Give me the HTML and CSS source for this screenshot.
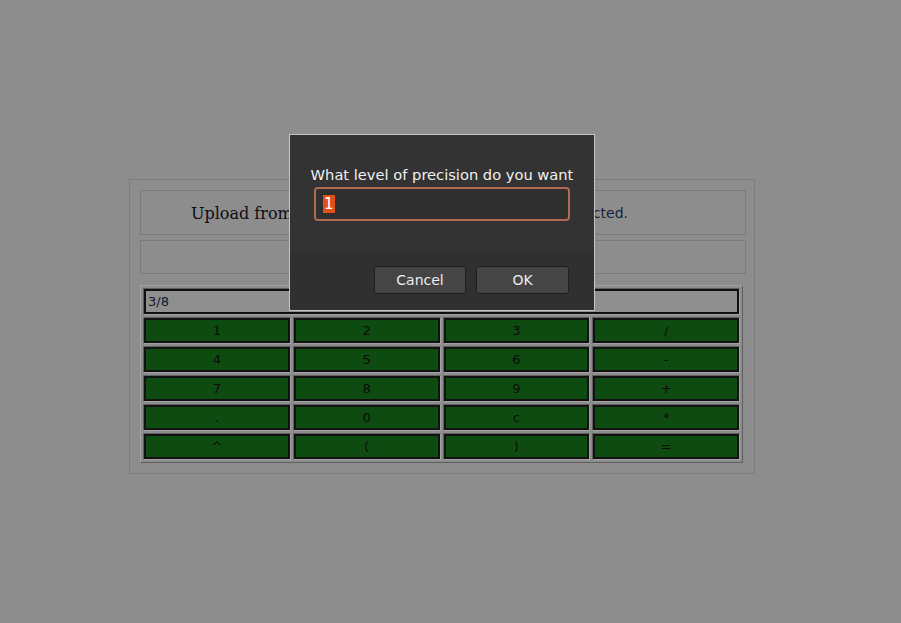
FILE: index.html
```html
<!DOCTYPE html>
<html>
<head>
<meta charset="utf-8">
<link rel="stylesheet" href="styles.css">
</head>
<body>
<div class="panel">
  <div class="upload-box">
    <span class="upload-label">Upload from file:</span>
    <span class="file-pick"><span class="fake-btn">Browse…</span><span class="file-status">No file selected.</span></span>
  </div>
  <div class="empty-box"></div>
  <table class="calc">
    <tr><td colspan="4"><div class="display">3/8</div></td></tr>
    <tr><td><div class="key">1</div></td><td><div class="key">2</div></td><td><div class="key">3</div></td><td><div class="key">/</div></td></tr>
    <tr><td><div class="key">4</div></td><td><div class="key">5</div></td><td><div class="key">6</div></td><td><div class="key">-</div></td></tr>
    <tr><td><div class="key">7</div></td><td><div class="key">8</div></td><td><div class="key">9</div></td><td><div class="key">+</div></td></tr>
    <tr><td><div class="key">.</div></td><td><div class="key">0</div></td><td><div class="key">c</div></td><td><div class="key">*</div></td></tr>
    <tr><td><div class="key">^</div></td><td><div class="key">(</div></td><td><div class="key">)</div></td><td><div class="key">=</div></td></tr>
  </table>
</div>

<div class="dialog">
  <div class="dialog-top">
    <div class="dialog-msg">What level of precision do you want</div>
    <div class="dialog-input"><span class="sel">1</span></div>
  </div>
  <div class="dialog-bottom">
    <div class="dlg-btn cancel">Cancel</div>
    <div class="dlg-btn ok">OK</div>
  </div>
</div>
</body>
</html>
```

FILE: styles.css
```css
html, body {
  margin: 0;
  padding: 0;
  background: #8d8d8d;
  width: 901px;
  height: 623px;
  overflow: hidden;
}
body {
  padding-top: 179px;
  box-sizing: border-box;
  font-family: "DejaVu Sans", sans-serif;
}
.panel {
  margin-left: 129px;
  width: 606px;
  padding: 10px 8px 10px 10px;
  border: 1px solid #7c7c7c;
}
.upload-box {
  height: 43px;
  border: 1px solid #7b7b7b;
  display: flex;
  align-items: center;
  justify-content: space-between;
  padding: 0 117px 0 50px;
}
.upload-label {
  font-family: "DejaVu Serif", serif;
  font-size: 16px;
  color: #0c0c12;
  padding-top: 2px;
}
.file-pick {
  display: flex;
  align-items: center;
  gap: 6px;
  font-size: 14px;
  color: #16233a;
}
.fake-btn {
  border: 1px solid #666;
  padding: 2px 6px;
}
.empty-box {
  margin-top: 5px;
  height: 32px;
  border: 1px solid #7b7b7b;
}
.calc {
  margin-top: 11px;
  width: 603px;
  table-layout: fixed;
  border-collapse: separate;
  border-spacing: 2px;
  border: 1px solid;
  border-color: #a2a2a2 #5f5f5f #5f5f5f #a2a2a2;
}
.calc td {
  padding: 0;
  border: 1px solid;
  border-color: #5f5f5f #a2a2a2 #a2a2a2 #5f5f5f;
}
.display {
  height: 21px;
  border: 2px solid #0f0f0f;
  background: #8f8f8f;
  font-size: 13px;
  line-height: 21px;
  padding-left: 2px;
  color: #10182a;
}
.key {
  height: 21px;
  border: 2px solid #121212;
  background: #0d4b10;
  text-align: center;
  font-size: 13px;
  line-height: 21px;
  color: #0b0b0b;
}

.dialog {
  position: absolute;
  left: 289px;
  top: 134px;
  width: 304px;
  height: 175px;
  border: 1px solid #c4c4c4;
  background: #303030;
  display: flex;
  flex-direction: column;
}
.dialog-top {
  background: #333333;
  height: 117px;
  display: flex;
  flex-direction: column;
  align-items: center;
  padding-top: 31px;
  box-sizing: border-box;
}
.dialog-msg {
  color: #f0f0f0;
  font-size: 14.67px;
  line-height: 18px;
}
.dialog-input {
  margin-top: 3px;
  width: 245px;
  height: 30px;
  border: 2px solid #b36a52;
  border-radius: 4px;
  background: #2f2f2f;
  display: flex;
  align-items: center;
  padding-left: 7px;
  box-sizing: content-box;
}
.sel {
  background: #e2511c;
  color: #ffffff;
  font-size: 15px;
  line-height: 18px;
  padding: 0 1px;
}
.dialog-bottom {
  flex: 1;
  display: flex;
  justify-content: flex-end;
  align-items: flex-start;
  gap: 10px;
  padding: 14px 25px 0 0;
}
.dlg-btn {
  height: 26px;
  border: 1px solid #1f1f1f;
  border-radius: 3px;
  background: #454545;
  color: #ececec;
  font-size: 14px;
  line-height: 26px;
  text-align: center;
}
.cancel { width: 90px; }
.ok { width: 91px; }
```
